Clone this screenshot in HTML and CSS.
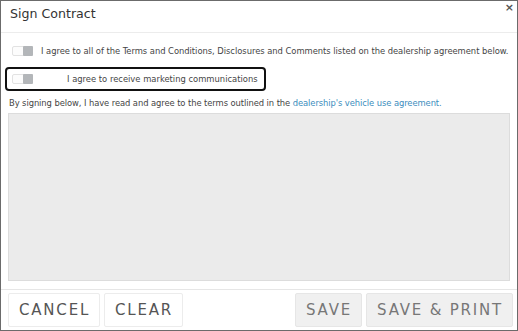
FILE: index.html
```html
<!DOCTYPE html>
<html>
<head>
<meta charset="utf-8">
<link rel="stylesheet" href="styles.css">
</head>
<body>
<div class="dialog">
  <div class="header">
    <span class="title">Sign Contract</span>
    <span class="close">×</span>
  </div>
  <div class="body">
    <div class="row">
      <span class="toggle"><span class="knob"></span></span>
      <span class="label">I agree to all of the Terms and Conditions, Disclosures and Comments listed on the dealership agreement below.</span>
    </div>
    <div class="row boxed">
      <span class="toggle"><span class="knob"></span></span>
      <span class="label indent">I agree to receive marketing communications</span>
    </div>
    <p class="note">By signing below, I have read and agree to the terms outlined in the <a class="link">dealership's vehicle use agreement.</a></p>
    <div class="pad"></div>
  </div>
  <div class="footer">
    <div class="group">
      <button class="btn">CANCEL</button>
      <button class="btn">CLEAR</button>
    </div>
    <div class="group">
      <button class="btn disabled">SAVE</button>
      <button class="btn disabled">SAVE &amp; PRINT</button>
    </div>
  </div>
</div>
</body>
</html>
```

FILE: styles.css
```css
html, body {
  margin: 0;
  padding: 0;
  background: #fff;
}
body {
  font-family: "DejaVu Sans", sans-serif;
  color: #444;
}
.dialog {
  box-sizing: border-box;
  width: 518px;
  height: 331px;
  border: 1px solid #6b6b6b;
  display: flex;
  flex-direction: column;
}
.header {
  height: 31px;
  border-bottom: 1px solid #ececec;
  display: flex;
  justify-content: space-between;
  align-items: flex-start;
  padding: 0 3px 0 9px;
}
.title {
  font-size: 12.6px;
  color: #333;
  margin-top: 5px;
}
.close {
  font-size: 11px;
  font-weight: bold;
  color: #555;
}
.body {
  flex: 1;
  padding: 10px 7px 0 7px;
  display: flex;
  flex-direction: column;
}
.row {
  display: flex;
  align-items: center;
  height: 16px;
  padding-left: 4px;
  font-size: 8.4px;
  color: #444;
  white-space: nowrap;
}
.row .label {
  letter-spacing: -0.035px;
}
.row.boxed {
  margin-top: 8px;
  margin-left: -3px;
  width: 261px;
  height: 24px;
  box-sizing: border-box;
  border: 2px solid #111;
  border-radius: 4px;
  padding-left: 5px;
}
.row.boxed .label {
  letter-spacing: 0;
}
.toggle {
  box-sizing: border-box;
  width: 21px;
  height: 10px;
  border: 1px solid #e2e2e2;
  border-radius: 2px;
  background: #fcfcfc;
  display: flex;
  justify-content: flex-end;
  flex-shrink: 0;
  margin-right: 8px;
}
.knob {
  width: 10px;
  height: 10px;
  margin: -1px -1px 0 0;
  background: #b3b6b9;
  border-radius: 1px;
}
.label.indent {
  margin-left: 26px;
}
.note {
  font-size: 8.4px;
  letter-spacing: -0.08px;
  color: #444;
  margin: 7px 0 0 1px;
}
.link {
  color: #3b8dbd;
}
.pad {
  margin-top: 5px;
  height: 166px;
  background: #ebebeb;
  border: 1px solid #dcdcdc;
}
.footer {
  border-top: 1px solid #e6e6e6;
  margin-top: 8px;
  display: flex;
  justify-content: space-between;
  padding: 3px 4px 3px 7px;
}
.group {
  display: flex;
  gap: 4px;
}
.btn {
  font-family: "DejaVu Sans", sans-serif;
  font-size: 15px;
  letter-spacing: 1.8px;
  color: #555;
  background: #fff;
  border: 1px solid #ececec;
  border-radius: 2px;
  height: 34px;
  padding: 0 9px 0 10px;
}
.btn.disabled {
  background: #f0f0f0;
  color: #777;
  border-color: #e6e6e6;
}
```
